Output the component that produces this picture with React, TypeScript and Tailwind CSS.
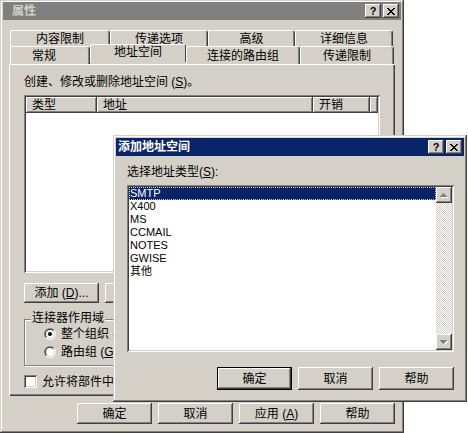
import React from "react";

const FONT = "font-['Liberation_Sans','Noto_Sans_CJK_SC',sans-serif]";
const RAISED =
  "bg-[#d4d0c8] shadow-[inset_-1px_-1px_0_#404040,inset_1px_1px_0_#fff,inset_-2px_-2px_0_#808080]";
const FRAME =
  "bg-[#d4d0c8] shadow-[inset_-1px_-1px_0_#404040,inset_1px_1px_0_#d4d0c8,inset_-2px_-2px_0_#808080,inset_2px_2px_0_#fff]";
const SUNKEN =
  "shadow-[inset_1px_1px_0_#808080,inset_-1px_-1px_0_#fff,inset_2px_2px_0_#404040,inset_-2px_-2px_0_#d4d0c8]";

function CloseGlyph() {
  return (
    <svg width="8" height="7" viewBox="0 0 8 7" shapeRendering="crispEdges">
      <path
        fill="#000"
        d="M0 0h2v1h-2z M6 0h2v1h-2z M1 1h2v1h-2z M5 1h2v1h-2z M2 2h4v1h-4z M3 3h2v1h-2z M2 4h4v1h-4z M1 5h2v1h-2z M5 5h2v1h-2z M0 6h2v1h-2z M6 6h2v1h-2z"
      />
    </svg>
  );
}

function TitleButton({ kind }: { kind: "help" | "close" }) {
  return (
    <div className={`w-[16px] h-[14px] flex items-center justify-center ${RAISED}`}>
      {kind === "help" ? (
        <span className="text-[11px] leading-none font-bold text-black font-['Liberation_Sans',sans-serif]">?</span>
      ) : (
        <CloseGlyph />
      )}
    </div>
  );
}

function Button({
  children,
  className = "",
  isDefault = false,
}: {
  children: React.ReactNode;
  className?: string;
  isDefault?: boolean;
}) {
  return (
    <div
      className={`w-[75px] flex items-center justify-center text-[12px] leading-[14px] shrink-0 ${RAISED} ${
        isDefault ? "border border-black" : ""
      } ${className}`}
    >
      {children}
    </div>
  );
}

function Tab({
  children,
  className = "",
}: {
  children: React.ReactNode;
  className?: string;
}) {
  return (
    <div
      className={`h-full shrink-0 flex items-center justify-center bg-[#d4d0c8] border-t border-l border-white border-r border-r-[#404040] rounded-tl-[2px] rounded-tr-[3px] shadow-[inset_-1px_0_0_#808080] ${className}`}
    >
      {children}
    </div>
  );
}

function Radio({ checked, id }: { checked?: boolean; id: string }) {
  return (
    <svg width="12" height="12" viewBox="0 0 12 12" className="shrink-0">
      <defs>
        <linearGradient id={`${id}-o`} x1="0" y1="0" x2="1" y2="1">
          <stop offset="0.5" stopColor="#808080" />
          <stop offset="0.5" stopColor="#ffffff" />
        </linearGradient>
        <linearGradient id={`${id}-i`} x1="0" y1="0" x2="1" y2="1">
          <stop offset="0.5" stopColor="#404040" />
          <stop offset="0.5" stopColor="#d4d0c8" />
        </linearGradient>
      </defs>
      <circle cx="6" cy="6" r="6" fill={`url(#${id}-o)`} />
      <circle cx="6" cy="6" r="5" fill={`url(#${id}-i)`} />
      <circle cx="6" cy="6" r="4" fill="#fff" />
      {checked && <circle cx="6" cy="6" r="2" fill="#000" />}
    </svg>
  );
}

function ArrowButton({ dir }: { dir: "up" | "down" }) {
  const d =
    dir === "up"
      ? "M3 0h1v1h-1z M2 1h3v1h-3z M1 2h5v1h-5z M0 3h7v1h-7z"
      : "M0 0h7v1h-7z M1 1h5v1h-5z M2 2h3v1h-3z M3 3h1v1h-1z";
  return (
    <div className={`w-[16px] h-[16px] shrink-0 flex items-center justify-center ${RAISED}`}>
      <svg width="8" height="5" viewBox="0 0 8 5" shapeRendering="crispEdges">
        <path d={d} fill="#fff" transform="translate(1 1)" />
        <path d={d} fill="#808080" />
      </svg>
    </div>
  );
}

function HeaderCell({ children, className = "" }: { children?: React.ReactNode; className?: string }) {
  return (
    <div className={`h-full shrink-0 flex items-center pl-[6px] ${RAISED} ${className}`}>{children}</div>
  );
}

function MainWindow() {
  return (
    <div className={`w-[404px] h-[433px] px-[3px] pt-[2px] flex flex-col ${FRAME}`}>
      <div className="h-[18px] shrink-0 bg-[#808080] flex items-center pl-[9px] pr-[2px]">
        <span className="font-bold text-[#d4d0c8] text-[12px] leading-[14px]">属性</span>
        <div className="ml-auto flex gap-[2px]">
          <TitleButton kind="help" />
          <TitleButton kind="close" />
        </div>
      </div>

      <div className="px-[6px] pt-[10px] flex flex-col">
        <div className="h-[16px] pl-[1px] flex">
          <Tab className="w-[100px]">内容限制</Tab>
          <Tab className="w-[98px]">传递选项</Tab>
          <Tab className="w-[87px]">高级</Tab>
          <Tab className="w-[98px]">详细信息</Tab>
        </div>
        <div className="h-[18px] pl-[1px] flex">
          <Tab className="w-[80px] pr-[12px]">常规</Tab>
          <Tab className="w-[96px] h-[21px] -mt-[2px] pb-[3px] relative z-10 shadow-none">地址空间</Tab>
          <Tab className="w-[114px]">连接的路由组</Tab>
          <Tab className="w-[94px]">传递限制</Tab>
        </div>

        <div className="h-[332px] bg-[#d4d0c8] shadow-[inset_1px_1px_0_#fff,inset_-1px_-1px_0_#404040,inset_-2px_-2px_0_#808080] pl-[15px] pt-[11px] flex flex-col items-start">
          <div>
            创建、修改或删除地址空间 (<span className="underline">S</span>)。
          </div>

          <div className={`mt-[6px] w-[356px] h-[178px] bg-white p-[2px] ${SUNKEN}`}>
            <div className="h-[16px] flex">
              <HeaderCell className="w-[71px]">类型</HeaderCell>
              <HeaderCell className="w-[216px]">地址</HeaderCell>
              <HeaderCell className="w-[57px]">开销</HeaderCell>
              <HeaderCell className="flex-1" />
            </div>
          </div>

          <div className="mt-[10px] flex gap-[6px]">
            <Button className="h-[20px]">
              添加 (<span className="underline">D</span>)...
            </Button>
            <Button className="h-[20px]">
              编辑 (<span className="underline">E</span>)...
            </Button>
            <Button className="h-[20px]">
              删除 (<span className="underline">R</span>)
            </Button>
          </div>

          <div className="relative mt-[16px] w-[356px] h-[47px] border border-[#808080] shadow-[inset_1px_1px_0_#fff,1px_1px_0_#fff] pt-[5px] pl-[19px] flex flex-col">
            <span className="absolute -top-[9px] left-[6px] bg-[#d4d0c8] px-[1px]">连接器作用域</span>
            <div className="h-[18px] flex items-center gap-[5px]">
              <Radio id="r-org" checked />
              <span>
                整个组织 (<span className="underline">O</span>)
              </span>
            </div>
            <div className="h-[18px] flex items-center gap-[5px]">
              <Radio id="r-grp" />
              <span>
                路由组 (<span className="underline">G</span>)
              </span>
            </div>
          </div>

          <div className="mt-[9px] h-[13px] flex items-center gap-[5px]">
            <div className={`w-[13px] h-[13px] bg-white shrink-0 ${SUNKEN}`} />
            <span>允许将部件中继到这些域</span>
          </div>
        </div>

        <div className="mt-[7px] flex justify-end gap-[6px]">
          <Button className="h-[21px]">确定</Button>
          <Button className="h-[21px]">取消</Button>
          <Button className="h-[21px]">
            应用 (<span className="underline">A</span>)
          </Button>
          <Button className="h-[21px]">帮助</Button>
        </div>
      </div>
    </div>
  );
}

const ADDRESS_TYPES = ["SMTP", "X400", "MS", "CCMAIL", "NOTES", "GWISE", "其他"];

function AddDialog() {
  return (
    <div className={`w-[354px] h-[267px] p-[3px] flex flex-col ${FRAME}`}>
      <div className="h-[18px] shrink-0 bg-[#0a246a] flex items-center pl-[2px] pr-[2px]">
        <span className="font-bold text-white text-[12px] leading-[14px]">添加地址空间</span>
        <div className="ml-auto flex gap-[2px]">
          <TitleButton kind="help" />
          <TitleButton kind="close" />
        </div>
      </div>

      <div className="pl-[11px] pt-[9px] flex flex-col items-start">
        <div>
          选择地址类型(<span className="underline">S</span>):
        </div>

        <div className={`mt-[6px] w-[327px] h-[167px] bg-white p-[2px] flex ${SUNKEN}`}>
          <div className="flex-1 flex flex-col text-[11px]">
            {ADDRESS_TYPES.map((t, i) => (
              <div
                key={t}
                className={
                  i === 0
                    ? "h-[13px] leading-[13px] pl-[1px] bg-[#0a246a] text-white outline outline-1 outline-dotted outline-[#d4d0c8] -outline-offset-1"
                    : "h-[13px] leading-[13px] pl-[1px]"
                }
              >
                {t}
              </div>
            ))}
          </div>
          <div className="w-[16px] h-full flex flex-col">
            <ArrowButton dir="up" />
            <div className="flex-1 bg-[image:repeating-conic-gradient(#d4d0c8_0_25%,#ffffff_0_50%)] bg-[length:2px_2px]" />
            <ArrowButton dir="down" />
          </div>
        </div>

        <div className="self-stretch mt-[15px] pr-[10px] flex justify-end gap-[6px]">
          <Button isDefault className="h-[23px]">
            确定
          </Button>
          <Button className="h-[23px]">取消</Button>
          <Button className="h-[23px]">帮助</Button>
        </div>
      </div>
    </div>
  );
}

export default function App() {
  return (
    <div className={`relative w-[468px] h-[433px] bg-white overflow-hidden text-[12px] leading-[14px] text-black ${FONT}`}>
      <MainWindow />
      <div className="absolute left-[113px] top-[135px]">
        <AddDialog />
      </div>
    </div>
  );
}
